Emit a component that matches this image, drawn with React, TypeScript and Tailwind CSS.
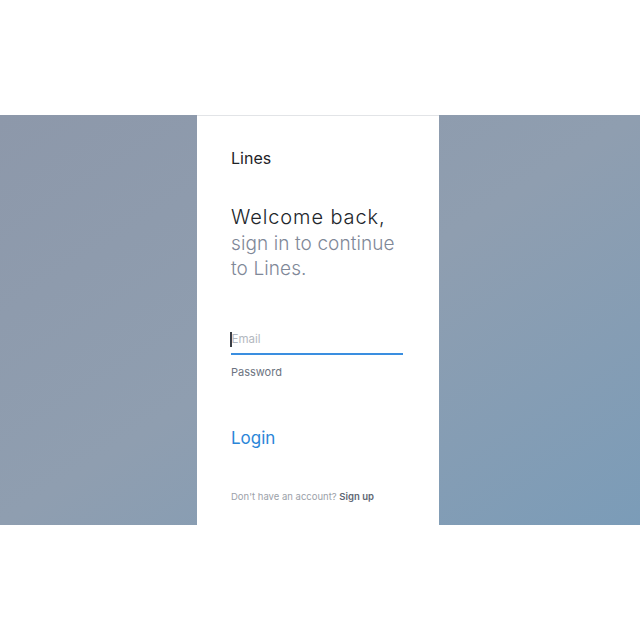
export default function App() {
  const font = { fontFamily: 'Inter, "Noto Sans", sans-serif' };
  return (
    <div className="w-[640px] h-[640px] bg-white flex flex-col" style={font}>
      <div className="h-[115px]" />
      <div className="h-[410px] grid grid-cols-[197px_242px_1fr] bg-gradient-to-br from-[#8d98aa] via-[#8f9eb0] to-[#7b9cb8]">
        <div />
        <div className="bg-white border-t border-[#e2e4e7] flex flex-col pl-[34px] pr-[36px]">
          <div className="mt-[32px] text-[16px] leading-[20px] text-[#1f2328]">Lines</div>
          <div className="mt-[37px] text-[19px] leading-[25.5px] font-light">
            <div className="text-[#22262b] text-[20px] tracking-[0.9px]">Welcome back,</div>
            <div className="text-[#7f8898] tracking-[0.1px]">sign in to continue</div>
            <div className="text-[#7f8898] tracking-[0.1px]">to Lines.</div>
          </div>
          <div className="mt-[49px] relative">
            <div className="flex items-center h-[18px]">
              <div className="w-[1.5px] h-[15px] bg-[#3b3f45] -ml-[1px]" />
              <span className="text-[11.5px] text-[#b3b8c0]">Email</span>
            </div>
            <div className="mt-[4px] h-[2px] bg-[#3a8ee0]" />
          </div>
          <div className="mt-[9px] text-[11px] text-[#6c7380]">Password</div>
          <div className="mt-[46px] text-[17px] text-[#2b86d8]">Login</div>
          <div className="mt-[38px] text-[9.5px] text-[#9ba1a9]">
            Don't have an account? <span className="text-[#5e6673] font-semibold">Sign up</span>
          </div>
        </div>
        <div />
      </div>
    </div>
  );
}
